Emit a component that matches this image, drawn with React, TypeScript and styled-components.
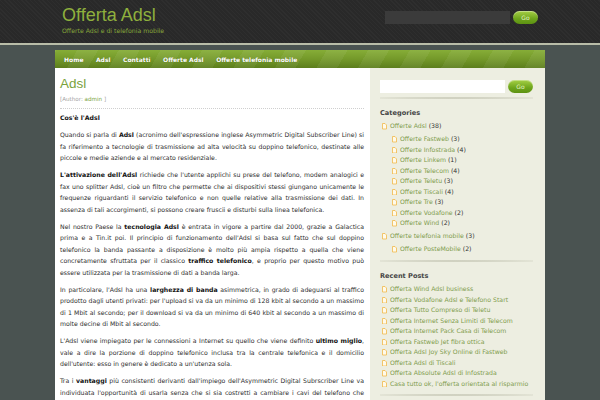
import styled, { createGlobalStyle } from "styled-components";

const GlobalStyle = createGlobalStyle`
  html, body {
    margin: 0;
    padding: 0;
  }
  body {
    background: #4a5351;
    font-family: "DejaVu Sans", Verdana, sans-serif;
    font-size: 6.2px;
    color: #333;
    height: 400px;
    overflow: hidden;
  }
`;

const categories = [
  { name: "Offerte Adsl", count: 38, children: [
    { name: "Offerte Fastweb", count: 3 },
    { name: "Offerte Infostrada", count: 4 },
    { name: "Offerte Linkem", count: 1 },
    { name: "Offerte Telecom", count: 4 },
    { name: "Offerte Teletu", count: 3 },
    { name: "Offerte Tiscali", count: 4 },
    { name: "Offerte Tre", count: 3 },
    { name: "Offerte Vodafone", count: 2 },
    { name: "Offerte Wind", count: 2 },
  ] },
  { name: "Offerte telefonia mobile", count: 3, children: [
    { name: "Offerte PosteMobile", count: 2 },
  ] },
];

const recentPosts = [
  "Offerta Wind Adsl business",
  "Offerta Vodafone Adsl e Telefono Start",
  "Offerta Tutto Compreso di Teletu",
  "Offerta Internet Senza Limiti di Telecom",
  "Offerta Internet Pack Casa di Telecom",
  "Offerta Fastweb Jet fibra ottica",
  "Offerta Adsl Joy Sky Online di Fastweb",
  "Offerta Adsl di Tiscali",
  "Offerta Absolute Adsl di Infostrada",
  "Casa tutto ok, l'offerta orientata al risparmio",
];

function PageIcon() {
  return (
    <Icon viewBox="0 0 5 6.5" width="5" height="6.5">
      <path d="M0.5 0.5 H3 L4.5 2 V6 H0.5 Z" fill="#fffaea" stroke="#f1b94a" strokeWidth="0.8" />
    </Icon>
  );
}

export default function App() {
  return (
    <>
      <GlobalStyle />
      <Header>
        <HeaderInner>
          <Brand>
            <SiteTitle>Offerta Adsl</SiteTitle>
            <Tagline>Offerte Adsl e di telefonia mobile</Tagline>
          </Brand>
          <SearchForm>
            <SearchInput $dark />
            <GoButton>Go</GoButton>
          </SearchForm>
        </HeaderInner>
      </Header>

      <Wrapper>
        <Nav>
          <NavLink>Home</NavLink>
          <NavLink>Adsl</NavLink>
          <NavLink>Contatti</NavLink>
          <NavLink>Offerte Adsl</NavLink>
          <NavLink>Offerte telefonia mobile</NavLink>
        </Nav>

        <Columns>
          <Content>
            <PostTitle>Adsl</PostTitle>
            <PostMeta>[Author: <a>admin</a> ]</PostMeta>
            <Entry>
              <p><b>Cos'è l'Adsl</b></p>
              <p>
                Quando si parla di <b>Adsl</b> (acronimo dell'espressione inglese Asymmetric Digital Subscriber Line)
                si fa riferimento a tecnologie di trasmissione ad alta velocità su doppino telefonico, destinate alle
                piccole e medie aziende e al mercato residenziale.
              </p>
              <p>
                <b>L'attivazione dell'Adsl</b> richiede che l'utente applichi su prese del telefono, modem analogici e
                fax uno splitter Adsl, cioè un filtro che permette che ai dispositivi stessi giungano unicamente le
                frequenze riguardanti il servizio telefonico e non quelle relative alla trasmissione dei dati. In
                assenza di tali accorgimenti, si possono creare fruscii e disturbi sulla linea telefonica.
              </p>
              <p>
                Nel nostro Paese la <b>tecnologia Adsl</b> è entrata in vigore a partire dal 2000, grazie a Galactica
                prima e a Tin.it poi. Il principio di funzionamento dell'Adsl si basa sul fatto che sul doppino
                telefonico la banda passante a disposizione è molto più ampia rispetto a quella che viene
                concretamente sfruttata per il classico <b>traffico telefonico</b>, e proprio per questo motivo può
                essere utilizzata per la trasmissione di dati a banda larga.
              </p>
              <p>
                In particolare, l'Adsl ha una <b>larghezza di banda</b> asimmetrica, in grado di adeguarsi al traffico
                prodotto dagli utenti privati: per l'upload si va da un minimo di 128 kbit al secondo a un massimo
                di 1 Mbit al secondo; per il download si va da un minimo di 640 kbit al secondo a un massimo di
                molte decine di Mbit al secondo.
              </p>
              <p>
                L'Adsl viene impiegato per le connessioni a Internet su quello che viene definito <b>ultimo miglio</b>,
                vale a dire la porzione di doppino telefonico inclusa tra la centrale telefonica e il domicilio
                dell'utente: esso in genere è dedicato a un'utenza sola.
              </p>
              <p>
                Tra i <b>vantaggi</b> più consistenti derivanti dall'impiego dell'Asymmetric Digital Subrscriber Line va
                individuata l'opportunità di usarla senza che si sia costretti a cambiare i cavi del telefono che
                sono già presenti: ciò, d'altra parte, fa si che le <b>linee trasmissive</b> vengano utilizzate oltre i limiti
                che in passato erano stati loro imposti dalla telefonia tradizionale.
              </p>
            </Entry>
          </Content>

          <Sidebar>
            <SearchForm $inSidebar>
              <SearchInput />
              <GoButton>Go</GoButton>
            </SearchForm>
            <Divider />

            <WidgetTitle>Categories</WidgetTitle>
            <List>
              {categories.map((cat) => (
                <li key={cat.name}>
                  <Item>
                    <PageIcon />
                    <span><a>{cat.name}</a> ({cat.count})</span>
                  </Item>
                  <SubList>
                    {cat.children.map((c) => (
                      <li key={c.name}>
                        <Item>
                          <PageIcon />
                          <span><a>{c.name}</a> ({c.count})</span>
                        </Item>
                      </li>
                    ))}
                  </SubList>
                </li>
              ))}
            </List>
            <Divider />

            <WidgetTitle>Recent Posts</WidgetTitle>
            <List>
              {recentPosts.map((p) => (
                <li key={p}>
                  <Item>
                    <PageIcon />
                    <a>{p}</a>
                  </Item>
                </li>
              ))}
            </List>
            <Divider />
          </Sidebar>
        </Columns>
      </Wrapper>
    </>
  );
}

const Header = styled.header`
  height: 43px;
  border-bottom: 2px solid #b9bda8;
  background:
    repeating-linear-gradient(45deg, rgba(255, 255, 255, 0.025) 0 1px, transparent 1px 3px),
    #292929;
`;

const HeaderInner = styled.div`
  width: 490px;
  margin: 0 auto;
  padding: 0 7px;
  box-sizing: border-box;
  display: flex;
  justify-content: space-between;
  align-items: flex-start;
`;

const Brand = styled.div`
  padding-top: 5px;
`;

const SiteTitle = styled.h1`
  margin: 0;
  font-family: "Liberation Sans", Arial, sans-serif;
  font-weight: normal;
  font-size: 18px;
  line-height: 20px;
  color: #8fb03d;
`;

const Tagline = styled.div`
  margin-top: 2px;
  font-size: 6.2px;
  color: #86a63a;
`;

const SearchForm = styled.div<{ $inSidebar?: boolean }>`
  display: flex;
  align-items: center;
  gap: 3px;
  padding-top: ${(p) => (p.$inSidebar ? "12px" : "11px")};
`;

const SearchInput = styled.div<{ $dark?: boolean }>`
  width: 125px;
  height: 13px;
  background: ${(p) => (p.$dark ? "#3b3b3b" : "#ffffff")};
`;

const GoButton = styled.div`
  width: 25px;
  height: 13px;
  border-radius: 7px;
  background: linear-gradient(#a6d046, #6ea51c 60%, #5d9212);
  box-shadow: inset 0 1px 0 rgba(255, 255, 255, 0.35);
  color: #e4f3c4;
  font-size: 6px;
  display: flex;
  align-items: center;
  justify-content: center;
`;

const Wrapper = styled.div`
  width: 490px;
  margin: 5px auto 0;
`;

const Nav = styled.nav`
  height: 18px;
  display: flex;
  align-items: center;
  gap: 12.5px;
  padding-left: 9px;
  background:
    repeating-linear-gradient(-60deg, rgba(255, 255, 255, 0.06) 0 18px, transparent 18px 36px),
    linear-gradient(#86ad37, #74992a 50%, #5c7e1c);
`;

const NavLink = styled.a`
  color: #ffffff;
  font-weight: bold;
  font-size: 6px;
  text-shadow: 0 0 1px rgba(0, 0, 0, 0.3);
`;

const Columns = styled.div`
  display: grid;
  grid-template-columns: 315px 175px;
  min-height: 340px;
`;

const Content = styled.main`
  background: #ffffff;
  padding: 8px 6px 0 5px;
`;

const PostTitle = styled.h2`
  margin: 0;
  font-family: "Liberation Sans", Arial, sans-serif;
  font-weight: normal;
  font-size: 13.5px;
  line-height: 16px;
  color: #7aa23d;
`;

const PostMeta = styled.div`
  margin-top: 3px;
  padding-bottom: 5px;
  border-bottom: 1px dotted #cfcfcf;
  font-size: 5.6px;
  line-height: 8px;
  color: #a3a3a3;

  a {
    color: #7aa23d;
  }
`;

const Entry = styled.div`
  padding-top: 3px;
  text-align: justify;
  line-height: 11.5px;
  color: #2e2e2e;

  p {
    margin: 0 0 5.5px;
  }

  b {
    color: #111;
  }
`;

const Sidebar = styled.aside`
  background: #edeee1;
  padding: 0 12px 0 10px;
`;

const Divider = styled.div`
  height: 2px;
  margin-top: 4px;
  background: radial-gradient(ellipse at center, #c3c4b2 0%, rgba(195, 196, 178, 0.45) 60%, transparent 100%);

  ul + & {
    margin-top: 5px;
  }
`;

const WidgetTitle = styled.h3`
  margin: 10px 0 3.25px;
  font-size: 6.6px;
  line-height: 9px;
  color: #454545;
`;

const List = styled.ul`
  list-style: none;
  margin: 0;
  padding: 0 0 0 2px;
  line-height: 10.5px;
  color: #333;

  a {
    color: #7f9c4d;
  }
`;

const SubList = styled.ul`
  list-style: none;
  margin: 2.5px 0;
  padding: 0 0 0 10px;
`;

const Item = styled.div`
  display: flex;
  align-items: center;
  gap: 3px;
`;

const Icon = styled.svg`
  flex: none;
`;
